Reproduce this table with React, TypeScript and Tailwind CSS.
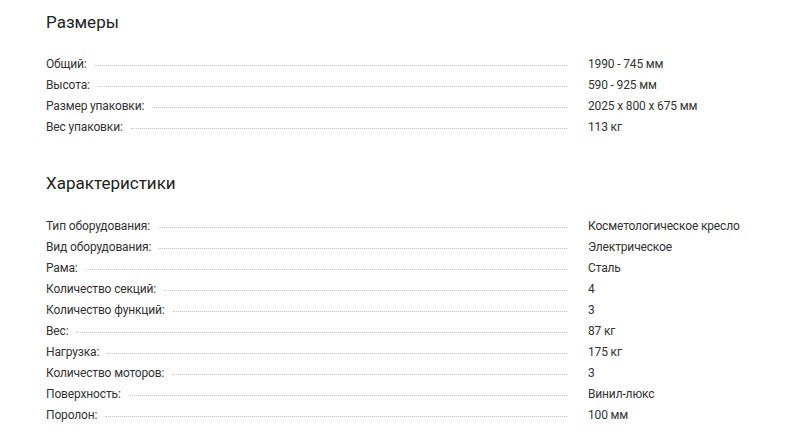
import React from "react";

const sizes = [
  ["Общий:", "1990 - 745 мм"],
  ["Высота:", "590 - 925 мм"],
  ["Размер упаковки:", "2025 x 800 x 675 мм"],
  ["Вес упаковки:", "113 кг"],
];

const specs = [
  ["Тип оборудования:", "Косметологическое кресло"],
  ["Вид оборудования:", "Электрическое"],
  ["Рама:", "Сталь"],
  ["Количество секций:", "4"],
  ["Количество функций:", "3"],
  ["Вес:", "87 кг"],
  ["Нагрузка:", "175 кг"],
  ["Количество моторов:", "3"],
  ["Поверхность:", "Винил-люкс"],
  ["Поролон:", "100 мм"],
];

const Row = ({ label, value }: { label: string; value: string }) => (
  <div className="flex items-center h-[21px]">
    <span className="whitespace-nowrap">{label}</span>
    <div className="flex-1 ml-2 mt-[3px] border-b border-dotted border-[#c4c4c4]" />
    <span className="w-[230px] pl-[21px] whitespace-nowrap">{value}</span>
  </div>
);

const App = () => {
  return (
    <div
      className="w-[797px] h-[448px] bg-white pl-[46px] pt-[10px] text-[12px] tracking-[-0.15px] text-[#333]"
      style={{ fontFamily: "Roboto, 'Liberation Sans', sans-serif" }}
    >
      <h2 className="text-[17px] leading-[24px] tracking-normal text-[#222]">Размеры</h2>
      <div className="mt-[19px]">
        {sizes.map(([l, v]) => (
          <Row key={l} label={l} value={v} />
        ))}
      </div>
      <h2 className="mt-[34px] text-[17px] leading-[24px] tracking-normal text-[#222]">Характеристики</h2>
      <div className="mt-[20px]">
        {specs.map(([l, v]) => (
          <Row key={l} label={l} value={v} />
        ))}
      </div>
    </div>
  );
};

export default App;
